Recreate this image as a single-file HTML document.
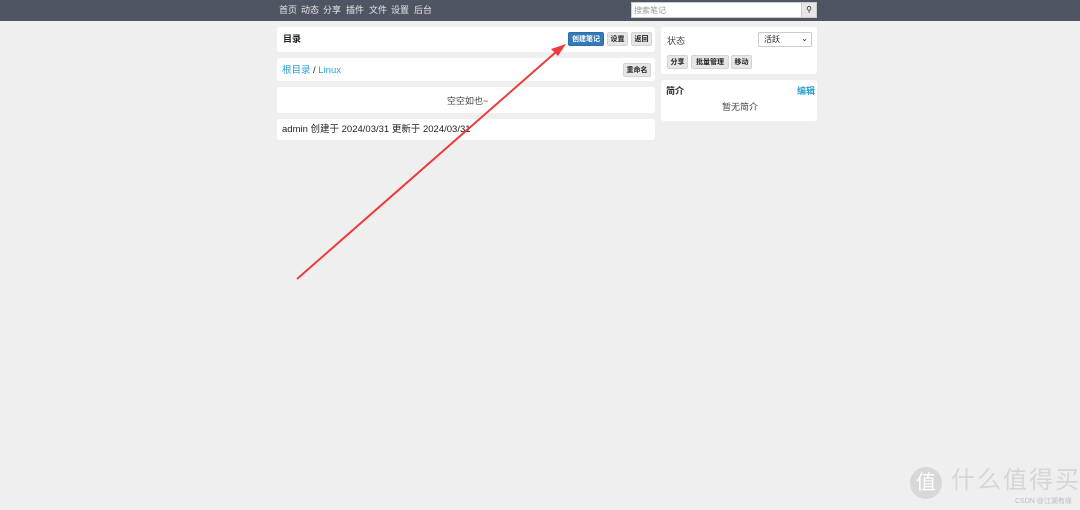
<!DOCTYPE html>
<html><head><meta charset="utf-8"><style>
*{margin:0;padding:0;box-sizing:border-box}
html,body{width:1080px;height:510px}
body{background:#efefef;font-family:"Liberation Sans","Noto Sans CJK SC",sans-serif;font-size:9px;line-height:1;color:#222;position:relative;overflow:hidden}
.nav{position:absolute;left:0;top:0;width:1080px;height:21px;background:#4f5563}
.nav span{position:absolute;top:6px;color:#e8e8e8;font-size:9px}
.a{position:absolute;white-space:nowrap}
.card{position:absolute;background:#fff;border-radius:3px}
.btn{position:absolute;background:#e6e6e6;border:1px solid #d4d4d4;border-radius:2px;font-size:7px;font-weight:bold;text-align:center;line-height:13px;color:#222;white-space:nowrap}
</style></head><body>
<div class="nav">
<span style="left:279px">首页</span><span style="left:301px">动态</span><span style="left:323px">分享</span><span style="left:346px">插件</span><span style="left:369px">文件</span><span style="left:391px">设置</span><span style="left:414px">后台</span>
<div class="a" style="left:631px;top:2px;width:171px;height:16px;background:#fff;border:1px solid #ccc;font-size:8px;color:#999;padding:4px 2px">搜索笔记</div>
<div class="a" style="left:801px;top:2px;width:16px;height:16px;background:#e6e6e6;border:1px solid #ccc;font-size:8px;text-align:center;line-height:14px">&#9906;</div>
</div>
<div class="card" style="left:277px;top:27px;width:378px;height:25px"><b class="a" style="left:6px;top:8px">目录</b></div>
<div class="btn" style="left:568px;top:32px;width:36px;height:14px;background:#337ab7;border-color:#2e6da4;color:#fff">创建笔记</div>
<div class="btn" style="left:607px;top:32px;width:21px;height:14px">设置</div>
<div class="btn" style="left:631px;top:32px;width:21px;height:14px">返回</div>
<div class="card" style="left:277px;top:58px;width:378px;height:23px"><span class="a" style="left:5px;top:8px;color:#2a9fd6;font-size:9.5px">根目录</span><span class="a" style="left:36px;top:8px;font-size:9.5px">/ <span style="color:#2a9fd6">Linux</span></span></div>
<div class="btn" style="left:623px;top:63px;width:28px;height:14px">重命名</div>
<div class="card" style="left:277px;top:87px;width:378px;height:26px"><span class="a" style="left:170px;top:10px;color:#444">空空如也~</span></div>
<div class="card" style="left:277px;top:119px;width:378px;height:21px"><span class="a" style="left:5px;top:6px;font-size:9.5px">admin 创建于 2024/03/31 更新于 2024/03/31</span></div>
<div class="card" style="left:661px;top:27px;width:156px;height:47px"><span class="a" style="left:6px;top:10px;color:#444">状态</span></div>
<div class="a" style="left:758px;top:32px;width:54px;height:15px;border:1px solid #ccc;border-radius:2px;background:#fff;font-size:8px;padding:3px 5px">活跃<span style="position:absolute;right:3px;top:2px">&#8964;</span></div>
<div class="btn" style="left:667px;top:55px;width:21px;height:14px">分享</div>
<div class="btn" style="left:691px;top:55px;width:38px;height:14px">批量管理</div>
<div class="btn" style="left:731px;top:55px;width:21px;height:14px">移动</div>
<div class="card" style="left:661px;top:80px;width:156px;height:41px"><b class="a" style="left:5px;top:7px">简介</b><b class="a" style="left:136px;top:7px;color:#2a9fd6">编辑</b><span class="a" style="left:61px;top:23px;color:#444">暂无简介</span></div>
<svg class="a" style="left:0;top:0" width="1080" height="510"><line x1="297" y1="279" x2="556" y2="52" stroke="#ee3b3b" stroke-width="2"/><polygon points="566,44 551,49 558,56" fill="#ee3b3b"/></svg>
<div class="a" style="left:910px;top:467px;width:32px;height:32px;border-radius:50%;background:#d8d8d8;color:#fff;font-size:20px;text-align:center;line-height:32px">值</div>
<div class="a" style="left:951px;top:469px;font-size:24px;color:#d6d6d6;letter-spacing:2px">什么值得买</div>
<div class="a" style="left:1015px;top:498px;font-size:7px;color:#bbb">CSDN @江湖有缘</div>
</body></html>
